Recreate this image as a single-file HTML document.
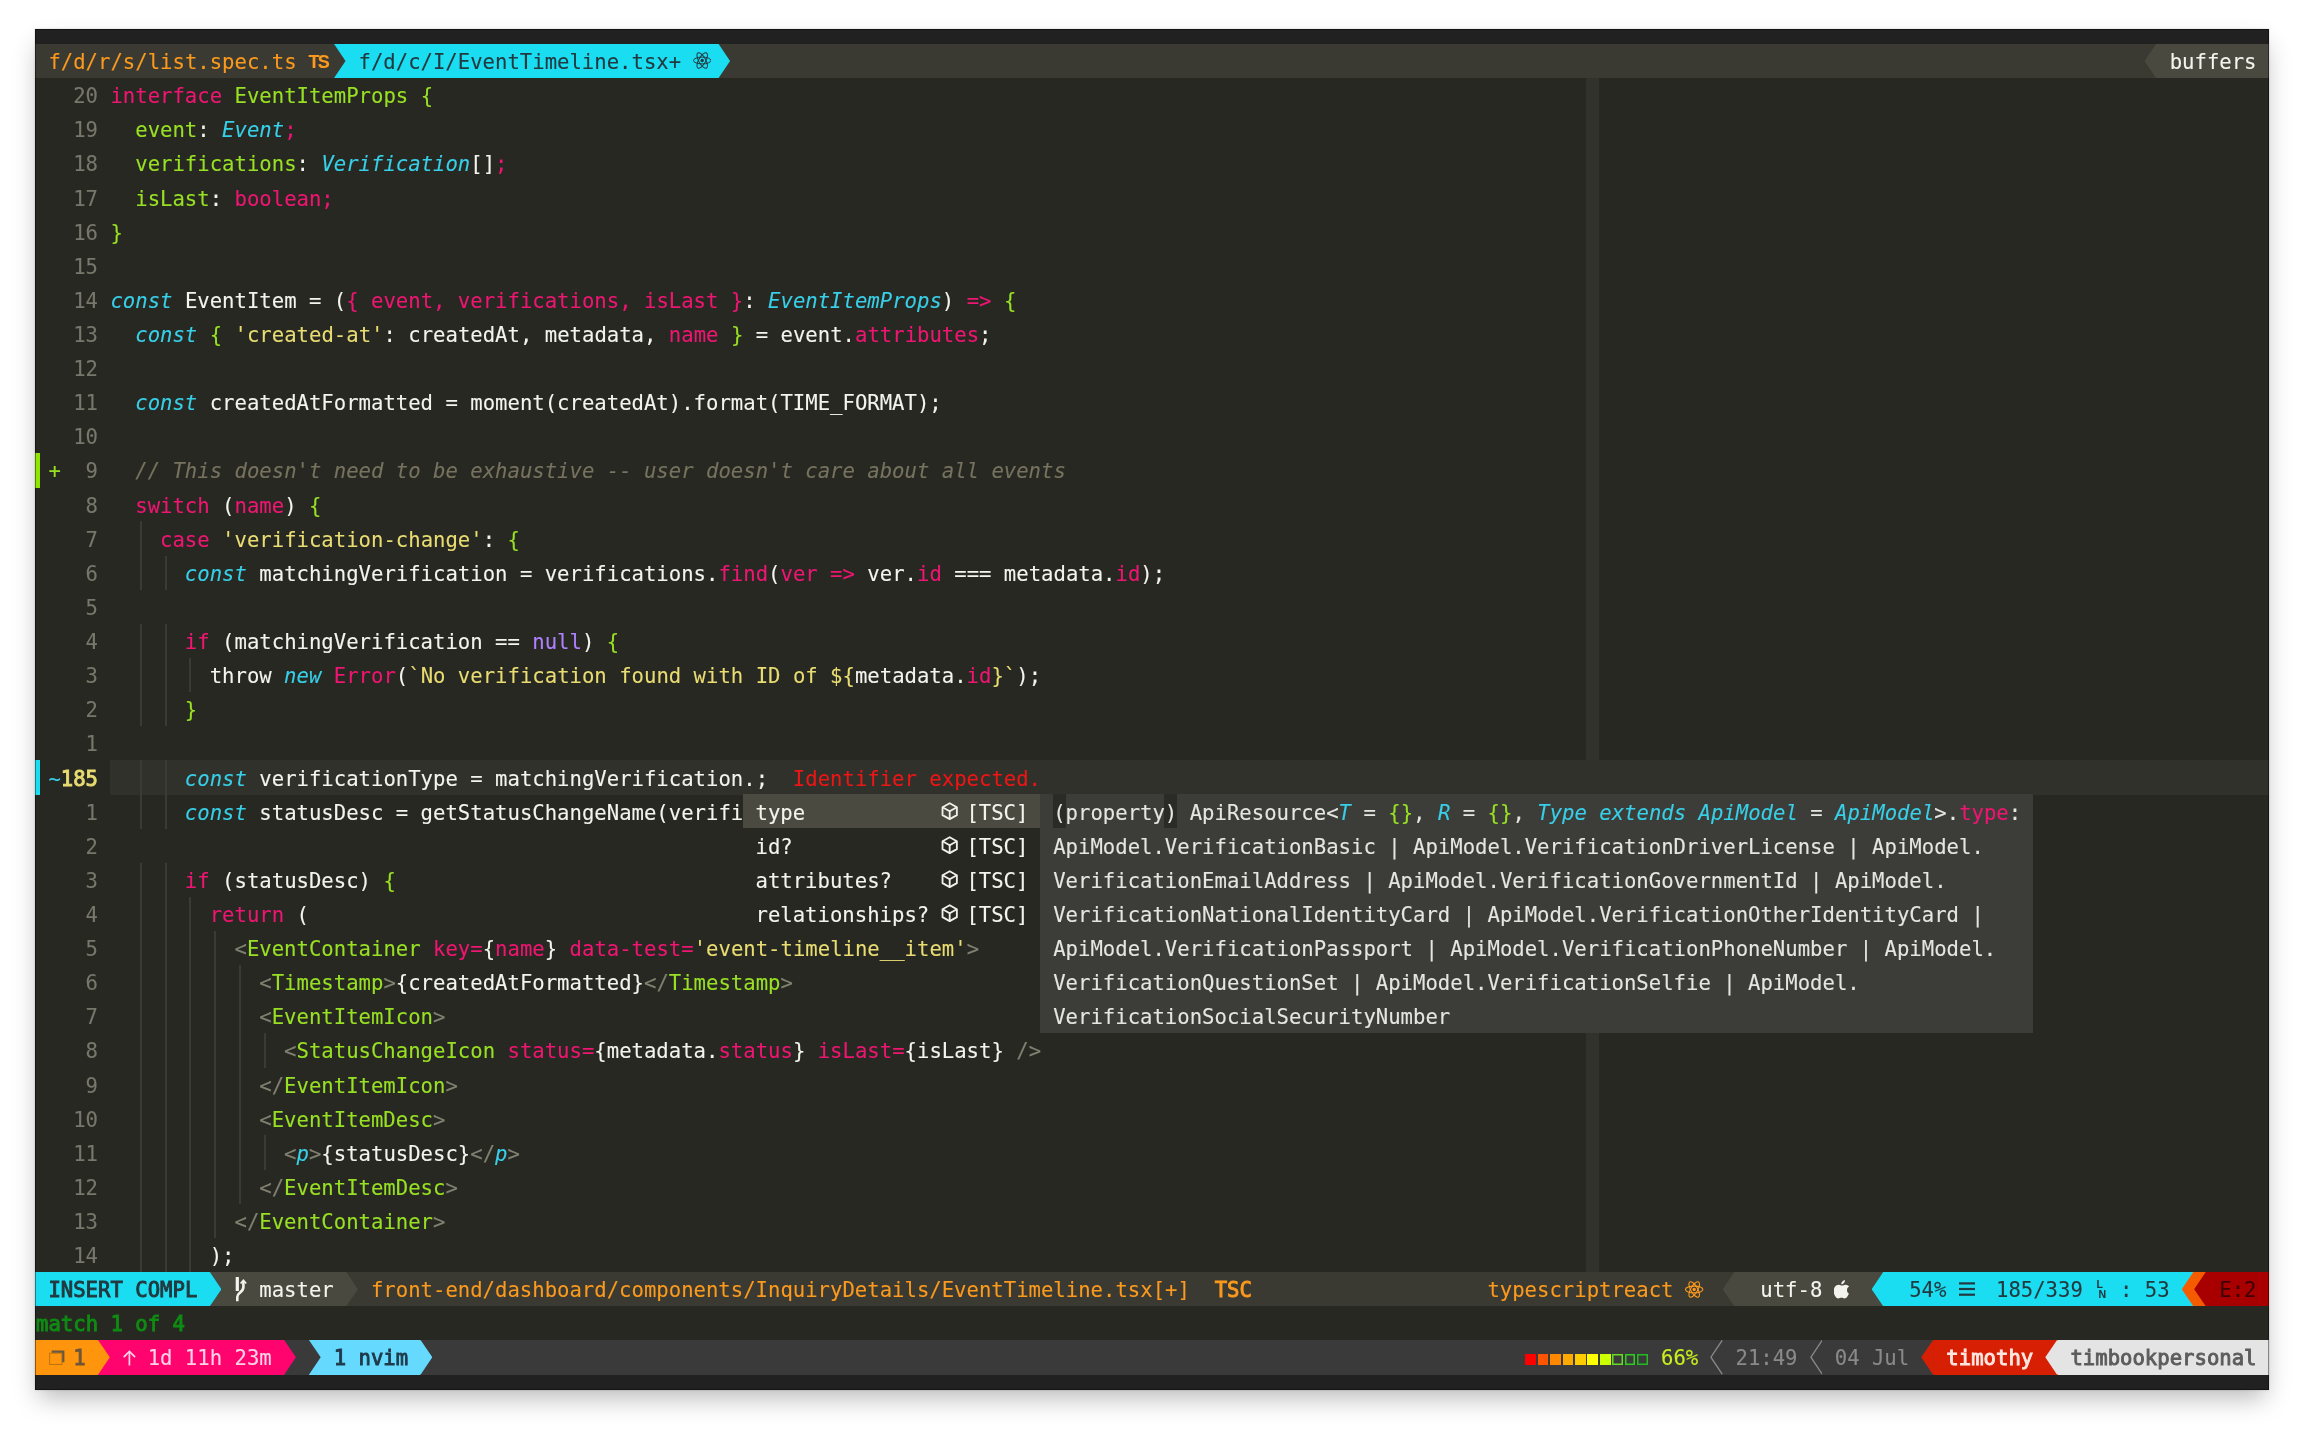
<!DOCTYPE html>
<html lang="en"><head><meta charset="utf-8"><title>nvim - EventTimeline.tsx</title>
<style>
html,body{margin:0;padding:0}
body{width:2304px;height:1431px;background:#fff;position:relative;overflow:hidden}
#win{position:absolute;left:35px;top:28.6px;width:2233.5px;height:1361.2px;background:#212121;overflow:hidden;
 font-family:"DejaVu Sans Mono","Liberation Mono",monospace;font-size:20.61px;line-height:34.12px;color:#f4f4ee;white-space:pre}
#shadow{position:absolute;left:35px;top:28.6px;width:2233.5px;height:1361.2px;box-shadow:0 12px 24px -4px rgba(0,0,0,.28),0 0 2px rgba(0,0,0,.18)}
#edge{position:absolute;left:0;top:0;width:100%;height:100%;box-shadow:inset 0 0 0 1px rgba(0,0,0,.42)}
#g{position:absolute;left:0.6px;top:0;width:100%;height:100%}
#tx{position:absolute;left:0.6px;top:0;width:100%;height:100%;will-change:transform;-webkit-text-stroke:0.1px}
#ed{position:absolute;left:0;top:49.31px;width:100%;height:1262.26px;background:#272822}
.l{position:absolute;left:0;width:100%;height:34.41px;overflow:visible}
.b{position:absolute;top:0;height:100%;display:block}
.x{position:absolute;top:0.9px;height:100%}
.ar{clip-path:polygon(0 0,1.2px 0,100% 50%,1.2px 100%,0 100%)}
.al{clip-path:polygon(100% 0,calc(100% - 1.1px) 0,0 50%,calc(100% - 1.1px) 100%,100% 100%)}
.ig{width:2px;background:#3a3b35}
.i{font-style:italic}
.bd{-webkit-text-stroke:0.9px}
.ts{position:absolute;top:0.4px;font:bold 18px "Liberation Sans",sans-serif;line-height:34.12px;color:#fb9a1e;letter-spacing:-1.9px}
.ln{position:absolute;top:7.4px;font:bold 10.5px "Liberation Sans",sans-serif;line-height:9.8px;color:#22393f;white-space:pre;letter-spacing:-1px}
.dk{color:#22393f}.er{color:#3d0000}.ms{color:#0f8c13}
.tk{color:#6e5537}.tp{color:#ffd3e6}.tn{color:#1f3a4a}.bt{color:#c8f01e}.tg{color:#8a8a8a}.tt{color:#ffe6e0}.th{color:#5c5c5c}
.w{color:#f4f4ee}.m{color:#ee1672}.g{color:#98e024}.c{color:#38cfe8}.y{color:#e8dc72}.p{color:#ae81ff}.o{color:#fb9a1e}.n{color:#77776b}.k{color:#77735f}.tb{color:#818172}.rd{color:#ec1616}.d{color:#e6e6e0}</style></head>
<body>
<div id="shadow"></div>
<div id="win"><div id="ed"></div>
<div id="g">
<div class="l" style="top:15.2px"><i class="b" style="left:-2px;width:2238.2px;background:#3a3a32"></i><i class="b" style="left:297.72px;width:384.86px;background:#1bddf2"></i><i class="b ar" style="left:297.12px;width:12.8px;background:#3a3a32"></i><svg class="b" style="left:657.36px;top:8.6px;width:18.4px;height:17px" viewBox="-9.2 -8.5 18.4 17"><g fill="none" stroke="#22393f" stroke-width="1.0"><ellipse rx="8.7" ry="3.4"/><ellipse rx="8.7" ry="3.4" transform="rotate(60)"/><ellipse rx="8.7" ry="3.4" transform="rotate(120)"/></g><circle r="1.7" fill="#22393f"/></svg><i class="b ar" style="left:681.67px;width:12.8px;background:#1bddf2"></i><i class="b" style="left:2121.26px;width:114.94px;background:#49493f"></i><i class="b al" style="left:2108.95px;width:12.71px;background:#49493f"></i></div>
<div class="l" style="top:49.31px"><i class="b" style="left:1550.62px;width:12.71px;background:#31322c"></i></div>
<div class="l" style="top:83.43px"><i class="b" style="left:1550.62px;width:12.71px;background:#31322c"></i></div>
<div class="l" style="top:117.55px"><i class="b" style="left:1550.62px;width:12.71px;background:#31322c"></i></div>
<div class="l" style="top:151.66px"><i class="b" style="left:1550.62px;width:12.71px;background:#31322c"></i></div>
<div class="l" style="top:185.78px"><i class="b" style="left:1550.62px;width:12.71px;background:#31322c"></i></div>
<div class="l" style="top:219.89px"><i class="b" style="left:1550.62px;width:12.71px;background:#31322c"></i></div>
<div class="l" style="top:254px"><i class="b" style="left:1550.62px;width:12.71px;background:#31322c"></i></div>
<div class="l" style="top:288.12px"><i class="b" style="left:1550.62px;width:12.71px;background:#31322c"></i></div>
<div class="l" style="top:322.24px"><i class="b" style="left:1550.62px;width:12.71px;background:#31322c"></i></div>
<div class="l" style="top:356.35px"><i class="b" style="left:1550.62px;width:12.71px;background:#31322c"></i></div>
<div class="l" style="top:390.47px"><i class="b" style="left:1550.62px;width:12.71px;background:#31322c"></i></div>
<div class="l" style="top:424.58px"><i class="b" style="left:1550.62px;width:12.71px;background:#31322c"></i><i class="b" style="left:-2px;width:6.2px;background:#8fe600"></i></div>
<div class="l" style="top:458.69px"><i class="b" style="left:1550.62px;width:12.71px;background:#31322c"></i></div>
<div class="l" style="top:492.81px"><i class="b" style="left:1550.62px;width:12.71px;background:#31322c"></i><i class="b ig" style="left:104.24px"></i></div>
<div class="l" style="top:526.93px"><i class="b" style="left:1550.62px;width:12.71px;background:#31322c"></i><i class="b ig" style="left:104.24px"></i><i class="b ig" style="left:129.05px"></i></div>
<div class="l" style="top:561.04px"><i class="b" style="left:1550.62px;width:12.71px;background:#31322c"></i></div>
<div class="l" style="top:595.16px"><i class="b" style="left:1550.62px;width:12.71px;background:#31322c"></i><i class="b ig" style="left:104.24px"></i><i class="b ig" style="left:129.05px"></i></div>
<div class="l" style="top:629.27px"><i class="b" style="left:1550.62px;width:12.71px;background:#31322c"></i><i class="b ig" style="left:104.24px"></i><i class="b ig" style="left:129.05px"></i><i class="b ig" style="left:153.86px"></i></div>
<div class="l" style="top:663.39px"><i class="b" style="left:1550.62px;width:12.71px;background:#31322c"></i><i class="b ig" style="left:104.24px"></i><i class="b ig" style="left:129.05px"></i></div>
<div class="l" style="top:697.5px"><i class="b" style="left:1550.62px;width:12.71px;background:#31322c"></i></div>
<div class="l" style="top:731.62px"><i class="b" style="left:74.43px;width:2161.77px;background:#30312b"></i><i class="b ig" style="left:104.24px"></i><i class="b ig" style="left:129.05px"></i><i class="b" style="left:-2px;width:6.2px;background:#1bddf2"></i></div>
<div class="l" style="top:765.73px"><i class="b" style="left:1550.62px;width:12.71px;background:#31322c"></i><i class="b ig" style="left:104.24px"></i><i class="b ig" style="left:129.05px"></i><i class="b" style="left:707.08px;width:298.02px;background:#4a4a40"></i><svg class="b" style="left:905.36px;top:7.6px;width:17.4px;height:18.4px" viewBox="-8.7 -9.5 17.4 19"><g fill="none" stroke="#f1f1ea" stroke-width="1.9" stroke-linejoin="round"><polygon points="0,-8.2 7.4,-4.1 7.4,4.1 0,8.2 -7.4,4.1 -7.4,-4.1"/><polyline points="-7.4,-4.1 0,0 7.4,-4.1"/><line x1="0" y1="0" x2="0" y2="8.2"/></g></svg><i class="b" style="left:1004.8px;width:992.7px;background:#3c3d38"></i><i class="b" style="left:1017.21px;width:12.71px;background:#2a2b26"></i><i class="b" style="left:1128.86px;width:12.71px;background:#2a2b26"></i></div>
<div class="l" style="top:799.85px"><i class="b" style="left:1550.62px;width:12.71px;background:#31322c"></i><i class="b" style="left:707.08px;width:298.02px;background:#272822"></i><svg class="b" style="left:905.36px;top:7.6px;width:17.4px;height:18.4px" viewBox="-8.7 -9.5 17.4 19"><g fill="none" stroke="#f1f1ea" stroke-width="1.9" stroke-linejoin="round"><polygon points="0,-8.2 7.4,-4.1 7.4,4.1 0,8.2 -7.4,4.1 -7.4,-4.1"/><polyline points="-7.4,-4.1 0,0 7.4,-4.1"/><line x1="0" y1="0" x2="0" y2="8.2"/></g></svg><i class="b" style="left:1004.8px;width:992.7px;background:#3c3d38"></i></div>
<div class="l" style="top:833.96px"><i class="b" style="left:1550.62px;width:12.71px;background:#31322c"></i><i class="b ig" style="left:104.24px"></i><i class="b ig" style="left:129.05px"></i><i class="b" style="left:707.08px;width:298.02px;background:#272822"></i><svg class="b" style="left:905.36px;top:7.6px;width:17.4px;height:18.4px" viewBox="-8.7 -9.5 17.4 19"><g fill="none" stroke="#f1f1ea" stroke-width="1.9" stroke-linejoin="round"><polygon points="0,-8.2 7.4,-4.1 7.4,4.1 0,8.2 -7.4,4.1 -7.4,-4.1"/><polyline points="-7.4,-4.1 0,0 7.4,-4.1"/><line x1="0" y1="0" x2="0" y2="8.2"/></g></svg><i class="b" style="left:1004.8px;width:992.7px;background:#3c3d38"></i></div>
<div class="l" style="top:868.08px"><i class="b" style="left:1550.62px;width:12.71px;background:#31322c"></i><i class="b ig" style="left:104.24px"></i><i class="b ig" style="left:129.05px"></i><i class="b ig" style="left:153.86px"></i><i class="b" style="left:707.08px;width:298.02px;background:#272822"></i><svg class="b" style="left:905.36px;top:7.6px;width:17.4px;height:18.4px" viewBox="-8.7 -9.5 17.4 19"><g fill="none" stroke="#f1f1ea" stroke-width="1.9" stroke-linejoin="round"><polygon points="0,-8.2 7.4,-4.1 7.4,4.1 0,8.2 -7.4,4.1 -7.4,-4.1"/><polyline points="-7.4,-4.1 0,0 7.4,-4.1"/><line x1="0" y1="0" x2="0" y2="8.2"/></g></svg><i class="b" style="left:1004.8px;width:992.7px;background:#3c3d38"></i></div>
<div class="l" style="top:902.19px"><i class="b" style="left:1550.62px;width:12.71px;background:#31322c"></i><i class="b ig" style="left:104.24px"></i><i class="b ig" style="left:129.05px"></i><i class="b ig" style="left:153.86px"></i><i class="b ig" style="left:178.67px"></i><i class="b" style="left:1004.8px;width:992.7px;background:#3c3d38"></i></div>
<div class="l" style="top:936.31px"><i class="b" style="left:1550.62px;width:12.71px;background:#31322c"></i><i class="b ig" style="left:104.24px"></i><i class="b ig" style="left:129.05px"></i><i class="b ig" style="left:153.86px"></i><i class="b ig" style="left:178.67px"></i><i class="b ig" style="left:203.48px"></i><i class="b" style="left:1004.8px;width:992.7px;background:#3c3d38"></i></div>
<div class="l" style="top:970.42px"><i class="b" style="left:1550.62px;width:12.71px;background:#31322c"></i><i class="b ig" style="left:104.24px"></i><i class="b ig" style="left:129.05px"></i><i class="b ig" style="left:153.86px"></i><i class="b ig" style="left:178.67px"></i><i class="b ig" style="left:203.48px"></i><i class="b" style="left:1004.8px;width:992.7px;background:#3c3d38"></i></div>
<div class="l" style="top:1004.54px"><i class="b" style="left:1550.62px;width:12.71px;background:#31322c"></i><i class="b ig" style="left:104.24px"></i><i class="b ig" style="left:129.05px"></i><i class="b ig" style="left:153.86px"></i><i class="b ig" style="left:178.67px"></i><i class="b ig" style="left:203.48px"></i><i class="b ig" style="left:228.29px"></i></div>
<div class="l" style="top:1038.65px"><i class="b" style="left:1550.62px;width:12.71px;background:#31322c"></i><i class="b ig" style="left:104.24px"></i><i class="b ig" style="left:129.05px"></i><i class="b ig" style="left:153.86px"></i><i class="b ig" style="left:178.67px"></i><i class="b ig" style="left:203.48px"></i></div>
<div class="l" style="top:1072.77px"><i class="b" style="left:1550.62px;width:12.71px;background:#31322c"></i><i class="b ig" style="left:104.24px"></i><i class="b ig" style="left:129.05px"></i><i class="b ig" style="left:153.86px"></i><i class="b ig" style="left:178.67px"></i><i class="b ig" style="left:203.48px"></i></div>
<div class="l" style="top:1106.88px"><i class="b" style="left:1550.62px;width:12.71px;background:#31322c"></i><i class="b ig" style="left:104.24px"></i><i class="b ig" style="left:129.05px"></i><i class="b ig" style="left:153.86px"></i><i class="b ig" style="left:178.67px"></i><i class="b ig" style="left:203.48px"></i><i class="b ig" style="left:228.29px"></i></div>
<div class="l" style="top:1141px"><i class="b" style="left:1550.62px;width:12.71px;background:#31322c"></i><i class="b ig" style="left:104.24px"></i><i class="b ig" style="left:129.05px"></i><i class="b ig" style="left:153.86px"></i><i class="b ig" style="left:178.67px"></i><i class="b ig" style="left:203.48px"></i></div>
<div class="l" style="top:1175.11px"><i class="b" style="left:1550.62px;width:12.71px;background:#31322c"></i><i class="b ig" style="left:104.24px"></i><i class="b ig" style="left:129.05px"></i><i class="b ig" style="left:153.86px"></i><i class="b ig" style="left:178.67px"></i></div>
<div class="l" style="top:1209.23px"><i class="b" style="left:1550.62px;width:12.71px;background:#31322c"></i><i class="b ig" style="left:104.24px"></i><i class="b ig" style="left:129.05px"></i><i class="b ig" style="left:153.86px"></i></div>
<div class="l" style="top:1243.34px"><i class="b" style="left:-2px;width:2238.2px;background:#3a3a32"></i><i class="b" style="left:-2px;width:175.97px;background:#1bddf2"></i><i class="b" style="left:173.67px;width:136.75px;background:#49493f"></i><i class="b ar" style="left:173.07px;width:12.8px;background:#1bddf2"></i><svg class="b" style="left:198.48px;top:4.5px;width:13px;height:26px" viewBox="0 0 13 26"><g fill="none" stroke="#f4f4ee"><path d="M3.3 1 V15" stroke-width="3.2"/><path d="M3.3 25.3 V21 C3.3 16.5 9.4 16.5 9.4 11 V5" stroke-width="2.6"/><path d="M6.6 7.6 L9.4 4.2 L12.2 7.6" stroke-width="1.6"/></g></svg><i class="b ar" style="left:309.52px;width:12.8px;background:#49493f"></i><svg class="b" style="left:1649.57px;top:8.6px;width:18.4px;height:17px" viewBox="-9.2 -8.5 18.4 17"><g fill="none" stroke="#fb9a1e" stroke-width="1.1"><ellipse rx="8.7" ry="3.4"/><ellipse rx="8.7" ry="3.4" transform="rotate(60)"/><ellipse rx="8.7" ry="3.4" transform="rotate(120)"/></g><circle r="1.7" fill="#fb9a1e"/></svg><i class="b" style="left:1699.48px;width:136.75px;background:#49493f"></i><i class="b al" style="left:1687.18px;width:12.71px;background:#49493f"></i><svg class="b" style="left:1798.32px;top:8.3px;width:15.6px;height:18.6px" viewBox="0 0 15.6 18.6"><path fill="#f4f4ee" d="M10.9 0.1 C11 1.2 10.6 2.2 9.9 3 C9.2 3.8 8.2 4.4 7.3 4.3 C7.2 3.3 7.7 2.2 8.3 1.5 C9 0.7 10.1 0.2 10.9 0.1 ZM14.9 13.6 C14.5 14.6 14.3 15 13.7 15.9 C12.9 17.1 11.8 18.5 10.5 18.5 C9.3 18.5 9 17.8 7.4 17.8 C5.8 17.8 5.4 18.5 4.2 18.5 C2.9 18.5 1.9 17.2 1.1 16 C-1 12.8 -0.5 8.9 0.8 7 C1.8 5.6 3.3 4.8 4.7 4.8 C6.1 4.8 7 5.6 8.2 5.6 C9.3 5.6 10 4.8 11.7 4.8 C12.9 4.8 14.2 5.5 15.1 6.6 C12.1 8.3 12.6 12.6 14.9 13.6 Z"/></svg><i class="b" style="left:1848.34px;width:298.02px;background:#1bddf2"></i><i class="b" style="left:1835.94px;width:12.71px;background:#49493f"></i><i class="b al" style="left:1836.04px;width:12.71px;background:#1bddf2"></i><svg class="b" style="left:1923.37px;top:10.4px;width:16px;height:14px" viewBox="0 0 16 14"><g fill="#22393f"><rect y="0.3" width="16" height="2.2"/><rect y="5.9" width="16" height="2.2"/><rect y="11.6" width="16" height="2.2"/></g></svg><i class="b" style="left:2146.07px;width:12.71px;background:#1bddf2"></i><i class="b al" style="left:2146.16px;width:12.71px;background:#f55c00"></i><i class="b" style="left:2158.47px;width:77.73px;background:#f55c00"></i><i class="b al" style="left:2158.57px;width:12.71px;background:#a80000"></i><i class="b" style="left:2170.88px;width:65.32px;background:#a80000"></i></div>
<div class="l" style="top:1277.46px"></div>
<div class="l" style="top:1311.57px"><i class="b" style="left:-2px;width:2238.2px;background:#3a3a3a"></i><i class="b" style="left:-2px;width:64.32px;background:#ff950c"></i><svg class="b" style="left:13.3px;top:9.6px;width:16px;height:15px" viewBox="0 0 16 15"><g fill="none"><rect x="0.6" y="3.2" width="12.3" height="11.3" stroke="#bd7410" stroke-width="1"/><path d="M2.7 1.7 H14.3 V12.3" stroke="#67593f" stroke-width="2.2"/></g></svg><i class="b" style="left:62.02px;width:186.38px;background:#ff046f"></i><i class="b ar" style="left:61.42px;width:12.8px;background:#ff950c"></i><svg class="b" style="left:87.03px;top:10px;width:13px;height:16px" viewBox="0 0 13 16"><g fill="none" stroke="#ffd3e6" stroke-width="1.7"><path d="M6.4 15.5 V1.6"/><path d="M0.7 7.2 L6.4 1.4 L12.1 7.2"/></g></svg><i class="b ar" style="left:247.5px;width:12.8px;background:#ff046f"></i><i class="b" style="left:272.91px;width:111.94px;background:#66d9ff"></i><i class="b ar" style="left:272.31px;width:12.8px;background:#3a3a3a"></i><i class="b ar" style="left:383.95px;width:12.8px;background:#66d9ff"></i><i class="b" style="left:1489.8px;top:13.9px;width:10.7px;height:10.9px;background:#ff0000"></i><i class="b" style="left:1502.2px;top:13.9px;width:10.7px;height:10.9px;background:#ff5500"></i><i class="b" style="left:1514.61px;top:13.9px;width:10.7px;height:10.9px;background:#ff8800"></i><i class="b" style="left:1527.01px;top:13.9px;width:10.7px;height:10.9px;background:#ffaa00"></i><i class="b" style="left:1539.42px;top:13.9px;width:10.7px;height:10.9px;background:#ffcc00"></i><i class="b" style="left:1551.83px;top:13.9px;width:10.7px;height:10.9px;background:#ffff00"></i><i class="b" style="left:1564.23px;top:13.9px;width:10.7px;height:10.9px;background:#ccff00"></i><i class="b" style="left:1576.63px;top:13.9px;width:10.7px;height:10.9px;box-shadow:inset 0 0 0 1.5px #66dd22"></i><i class="b" style="left:1589.04px;top:13.9px;width:10.7px;height:10.9px;box-shadow:inset 0 0 0 1.5px #33cc22"></i><i class="b" style="left:1601.44px;top:13.9px;width:10.7px;height:10.9px;box-shadow:inset 0 0 0 1.5px #22bb22"></i><svg class="b" style="left:1674.67px;width:12.4px" viewBox="0 0 12.4 34.1" preserveAspectRatio="none"><polyline points="12.2,0.3 0.9,17.05 12.2,33.8" fill="none" stroke="#8a8a8a" stroke-width="1.3"/></svg><svg class="b" style="left:1773.91px;width:12.4px" viewBox="0 0 12.4 34.1" preserveAspectRatio="none"><polyline points="12.2,0.3 0.9,17.05 12.2,33.8" fill="none" stroke="#8a8a8a" stroke-width="1.3"/></svg><i class="b" style="left:1897.96px;width:124.35px;background:#d71f04"></i><i class="b al" style="left:1885.66px;width:12.71px;background:#d71f04"></i><i class="b" style="left:2022.01px;width:214.19px;background:#e4e4e4"></i><i class="b al" style="left:2009.71px;width:12.71px;background:#e4e4e4"></i></div>
</div>
<div id="tx">
<div class="l" style="top:15.2px"><span class="x" style="left:12.4px"><span class="o">f/d/r/s/list.spec.ts</span></span><span class="ts" style="left:272.61px">TS</span><span class="x" style="left:322.53px"><span class="dk">f/d/c/I/EventTimeline.tsx+</span></span><span class="x" style="left:2133.66px"><span class="w">buffers</span></span></div>
<div class="l" style="top:49.31px"><span class="x" style="left:37.21px"><span class="n">20</span></span><span class="x" style="left:74.43px"><span class="m">interface</span><span class="w"> </span><span class="g">EventItemProps {</span></span></div>
<div class="l" style="top:83.43px"><span class="x" style="left:37.21px"><span class="n">19</span></span><span class="x" style="left:99.24px"><span class="g">event</span><span class="w">: </span><span class="c i">Event</span><span class="m">;</span></span></div>
<div class="l" style="top:117.55px"><span class="x" style="left:37.21px"><span class="n">18</span></span><span class="x" style="left:99.24px"><span class="g">verifications</span><span class="w">: </span><span class="c i">Verification</span><span class="w">[]</span><span class="m">;</span></span></div>
<div class="l" style="top:151.66px"><span class="x" style="left:37.21px"><span class="n">17</span></span><span class="x" style="left:99.24px"><span class="g">isLast</span><span class="w">: </span><span class="m">boolean;</span></span></div>
<div class="l" style="top:185.78px"><span class="x" style="left:37.21px"><span class="n">16</span></span><span class="x" style="left:74.43px"><span class="g">}</span></span></div>
<div class="l" style="top:219.89px"><span class="x" style="left:37.21px"><span class="n">15</span></span></div>
<div class="l" style="top:254px"><span class="x" style="left:37.21px"><span class="n">14</span></span><span class="x" style="left:74.43px"><span class="c i">const</span><span class="w"> EventItem = (</span><span class="m">{ event, verifications, isLast }</span><span class="w">: </span><span class="c i">EventItemProps</span><span class="w">) </span><span class="m">=&gt;</span><span class="w"> </span><span class="g">{</span></span></div>
<div class="l" style="top:288.12px"><span class="x" style="left:37.21px"><span class="n">13</span></span><span class="x" style="left:99.24px"><span class="c i">const</span><span class="w"> </span><span class="g">{</span><span class="w"> </span><span class="y">'created-at'</span><span class="w">: createdAt, metadata, </span><span class="m">name</span><span class="w"> </span><span class="g">}</span><span class="w"> = event.</span><span class="m">attributes</span><span class="w">;</span></span></div>
<div class="l" style="top:322.24px"><span class="x" style="left:37.21px"><span class="n">12</span></span></div>
<div class="l" style="top:356.35px"><span class="x" style="left:37.21px"><span class="n">11</span></span><span class="x" style="left:99.24px"><span class="c i">const</span><span class="w"> createdAtFormatted = moment(createdAt).format(TIME_FORMAT);</span></span></div>
<div class="l" style="top:390.47px"><span class="x" style="left:37.21px"><span class="n">10</span></span></div>
<div class="l" style="top:424.58px"><span class="x" style="left:12.4px"><span class="g">+</span></span><span class="x" style="left:49.62px"><span class="n">9</span></span><span class="x" style="left:99.24px"><span class="k i">// This doesn't need to be exhaustive -- user doesn't care about all events</span></span></div>
<div class="l" style="top:458.69px"><span class="x" style="left:49.62px"><span class="n">8</span></span><span class="x" style="left:99.24px"><span class="m">switch</span><span class="w"> (</span><span class="m">name</span><span class="w">) </span><span class="g">{</span></span></div>
<div class="l" style="top:492.81px"><span class="x" style="left:49.62px"><span class="n">7</span></span><span class="x" style="left:124.05px"><span class="m">case</span><span class="w"> </span><span class="y">'verification-change'</span><span class="w">: </span><span class="g">{</span></span></div>
<div class="l" style="top:526.93px"><span class="x" style="left:49.62px"><span class="n">6</span></span><span class="x" style="left:148.86px"><span class="c i">const</span><span class="w"> matchingVerification = verifications.</span><span class="m">find</span><span class="w">(</span><span class="m">ver =&gt;</span><span class="w"> ver.</span><span class="m">id</span><span class="w"> === metadata.</span><span class="m">id</span><span class="w">);</span></span></div>
<div class="l" style="top:561.04px"><span class="x" style="left:49.62px"><span class="n">5</span></span></div>
<div class="l" style="top:595.16px"><span class="x" style="left:49.62px"><span class="n">4</span></span><span class="x" style="left:148.86px"><span class="m">if</span><span class="w"> (matchingVerification == </span><span class="p">null</span><span class="w">) </span><span class="g">{</span></span></div>
<div class="l" style="top:629.27px"><span class="x" style="left:49.62px"><span class="n">3</span></span><span class="x" style="left:173.67px"><span class="w">throw </span><span class="c i">new</span><span class="w"> </span><span class="m">Error</span><span class="w">(</span><span class="y">`No verification found with ID of ${</span><span class="w">metadata.</span><span class="m">id</span><span class="y">}`</span><span class="w">);</span></span></div>
<div class="l" style="top:663.39px"><span class="x" style="left:49.62px"><span class="n">2</span></span><span class="x" style="left:148.86px"><span class="g">}</span></span></div>
<div class="l" style="top:697.5px"><span class="x" style="left:49.62px"><span class="n">1</span></span></div>
<div class="l" style="top:731.62px"><span class="x" style="left:12.4px"><span class="c">~</span></span><span class="x" style="left:24.81px"><span class="y bd">185</span></span><span class="x" style="left:148.86px"><span class="c i">const</span><span class="w"> verificationType = matchingVerification.;  </span><span class="rd">Identifier expected.</span></span></div>
<div class="l" style="top:765.73px"><span class="x" style="left:49.62px"><span class="n">1</span></span><span class="x" style="left:148.86px"><span class="c i">const</span><span class="w"> statusDesc = getStatusChangeName(verifi</span></span><span class="x" style="left:719.49px"><span class="w">type</span></span><span class="x" style="left:930.38px"><span class="w">[TSC]</span></span><span class="x" style="left:1017.21px"><span class="d">(property) ApiResource&lt;</span><span class="c i">T</span><span class="d"> = </span><span class="g">{}</span><span class="d">, </span><span class="c i">R</span><span class="d"> = </span><span class="g">{}</span><span class="d">, </span><span class="c i">Type extends ApiModel</span><span class="d"> = </span><span class="c i">ApiModel</span><span class="d">&gt;.</span><span class="m">type</span><span class="d">:</span></span></div>
<div class="l" style="top:799.85px"><span class="x" style="left:49.62px"><span class="n">2</span></span><span class="x" style="left:719.49px"><span class="w">id?</span></span><span class="x" style="left:930.38px"><span class="w">[TSC]</span></span><span class="x" style="left:1017.21px"><span class="d">ApiModel.VerificationBasic | ApiModel.VerificationDriverLicense | ApiModel.</span></span></div>
<div class="l" style="top:833.96px"><span class="x" style="left:49.62px"><span class="n">3</span></span><span class="x" style="left:148.86px"><span class="m">if</span><span class="w"> (statusDesc) </span><span class="g">{</span></span><span class="x" style="left:719.49px"><span class="w">attributes?</span></span><span class="x" style="left:930.38px"><span class="w">[TSC]</span></span><span class="x" style="left:1017.21px"><span class="d">VerificationEmailAddress | ApiModel.VerificationGovernmentId | ApiModel.</span></span></div>
<div class="l" style="top:868.08px"><span class="x" style="left:49.62px"><span class="n">4</span></span><span class="x" style="left:173.67px"><span class="m">return</span><span class="w"> (</span></span><span class="x" style="left:719.49px"><span class="w">relationships?</span></span><span class="x" style="left:930.38px"><span class="w">[TSC]</span></span><span class="x" style="left:1017.21px"><span class="d">VerificationNationalIdentityCard | ApiModel.VerificationOtherIdentityCard |</span></span></div>
<div class="l" style="top:902.19px"><span class="x" style="left:49.62px"><span class="n">5</span></span><span class="x" style="left:198.48px"><span class="tb">&lt;</span><span class="g">EventContainer</span><span class="w"> </span><span class="m">key=</span><span class="w">{</span><span class="m">name</span><span class="w">} </span><span class="m">data-test=</span><span class="y">'event-timeline__item'</span><span class="tb">&gt;</span></span><span class="x" style="left:1017.21px"><span class="d">ApiModel.VerificationPassport | ApiModel.VerificationPhoneNumber | ApiModel.</span></span></div>
<div class="l" style="top:936.31px"><span class="x" style="left:49.62px"><span class="n">6</span></span><span class="x" style="left:223.29px"><span class="tb">&lt;</span><span class="g">Timestamp</span><span class="tb">&gt;</span><span class="w">{createdAtFormatted}</span><span class="tb">&lt;/</span><span class="g">Timestamp</span><span class="tb">&gt;</span></span><span class="x" style="left:1017.21px"><span class="d">VerificationQuestionSet | ApiModel.VerificationSelfie | ApiModel.</span></span></div>
<div class="l" style="top:970.42px"><span class="x" style="left:49.62px"><span class="n">7</span></span><span class="x" style="left:223.29px"><span class="tb">&lt;</span><span class="g">EventItemIcon</span><span class="tb">&gt;</span></span><span class="x" style="left:1017.21px"><span class="d">VerificationSocialSecurityNumber</span></span></div>
<div class="l" style="top:1004.54px"><span class="x" style="left:49.62px"><span class="n">8</span></span><span class="x" style="left:248.1px"><span class="tb">&lt;</span><span class="g">StatusChangeIcon</span><span class="w"> </span><span class="m">status=</span><span class="w">{metadata.</span><span class="m">status</span><span class="w">} </span><span class="m">isLast=</span><span class="w">{isLast} </span><span class="tb">/&gt;</span></span></div>
<div class="l" style="top:1038.65px"><span class="x" style="left:49.62px"><span class="n">9</span></span><span class="x" style="left:223.29px"><span class="tb">&lt;/</span><span class="g">EventItemIcon</span><span class="tb">&gt;</span></span></div>
<div class="l" style="top:1072.77px"><span class="x" style="left:37.21px"><span class="n">10</span></span><span class="x" style="left:223.29px"><span class="tb">&lt;</span><span class="g">EventItemDesc</span><span class="tb">&gt;</span></span></div>
<div class="l" style="top:1106.88px"><span class="x" style="left:37.21px"><span class="n">11</span></span><span class="x" style="left:248.1px"><span class="tb">&lt;</span><span class="c i">p</span><span class="tb">&gt;</span><span class="w">{statusDesc}</span><span class="tb">&lt;/</span><span class="c i">p</span><span class="tb">&gt;</span></span></div>
<div class="l" style="top:1141px"><span class="x" style="left:37.21px"><span class="n">12</span></span><span class="x" style="left:223.29px"><span class="tb">&lt;/</span><span class="g">EventItemDesc</span><span class="tb">&gt;</span></span></div>
<div class="l" style="top:1175.11px"><span class="x" style="left:37.21px"><span class="n">13</span></span><span class="x" style="left:198.48px"><span class="tb">&lt;/</span><span class="g">EventContainer</span><span class="tb">&gt;</span></span></div>
<div class="l" style="top:1209.23px"><span class="x" style="left:37.21px"><span class="n">14</span></span><span class="x" style="left:173.67px"><span class="w">);</span></span></div>
<div class="l" style="top:1243.34px"><span class="x" style="left:12.4px"><span class="dk bd">INSERT COMPL</span></span><span class="x" style="left:223.29px"><span class="w">master</span></span><span class="x" style="left:334.94px"><span class="o">front-end/dashboard/components/InquiryDetails/EventTimeline.tsx[+]  </span><span class="o bd">TSC</span></span><span class="x" style="left:1451.38px"><span class="o">typescriptreact</span></span><span class="x" style="left:1724.29px"><span class="w">utf-8</span></span><span class="x" style="left:1873.15px"><span class="dk">54%</span></span><span class="x" style="left:1959.99px"><span class="dk">185/339</span></span><span class="ln" style="left:2060.53px">L<br> N</span><span class="x" style="left:2084.04px"><span class="dk">: 53</span></span><span class="x" style="left:2183.28px"><span class="er">E:2</span></span></div>
<div class="l" style="top:1277.46px"><span class="x" style="left:0px"><span class="ms bd">match 1 of 4</span></span></div>
<div class="l" style="top:1311.57px"><span class="x" style="left:37.21px"><span class="tk bd">1</span></span><span class="x" style="left:111.64px"><span class="tp">1d 11h 23m</span></span><span class="x" style="left:297.72px"><span class="tn bd">1 nvim</span></span><span class="x" style="left:1625.05px"><span class="bt">66%</span></span><span class="x" style="left:1699.48px"><span class="tg">21:49</span></span><span class="x" style="left:1798.72px"><span class="tg">04 Jul</span></span><span class="x" style="left:1910.37px"><span class="tt bd">timothy</span></span><span class="x" style="left:2034.42px"><span class="th bd">timbookpersonal</span></span></div>
</div>
<div id="edge"></div>
</div>
</body></html>
